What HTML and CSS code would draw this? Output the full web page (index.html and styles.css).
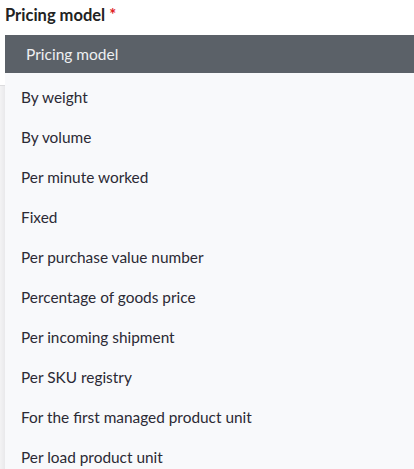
FILE: index.html
```html
<!DOCTYPE html>
<html>
<head>
<meta charset="utf-8">
<link rel="stylesheet" href="styles.css">
</head>
<body>
<div class="field">
  <div class="label">Pricing model <span class="req">*</span></div>
  <div class="select">
    <div class="side"></div>
    <div class="dropdown">
      <div class="head">Pricing model</div>
      <ul class="options">
        <li>By weight</li>
        <li>By volume</li>
        <li>Per minute worked</li>
        <li>Fixed</li>
        <li>Per purchase value number</li>
        <li>Percentage of goods price</li>
        <li>Per incoming shipment</li>
        <li>Per SKU registry</li>
        <li>For the first managed product unit</li>
        <li>Per load product unit</li>
      </ul>
    </div>
  </div>
</div>
</body>
</html>
```
FILE: styles.css
```css
html, body {
  margin: 0;
  padding: 0;
  background: #ffffff;
  font-family: Lato, "Noto Sans", sans-serif;
  color: #2b2a35;
  overflow: hidden;
}
.field {
  width: 414px;
  height: 469px;
}
.label {
  font-weight: 700;
  font-size: 16.5px;
  line-height: 20px;
  padding: 5px 0 0 5px;
  height: 30px;
  box-sizing: border-box;
  color: #222;
}
.req {
  color: #e0201e;
}
.select {
  display: flex;
  margin-top: 5px;
}
.side {
  width: 5px;
  flex: none;
  margin-top: 50px;
  border-top: 1px solid #dcdcde;
  background: linear-gradient(to right, #f3f3f4, #e9e9eb);
  height: 400px;
}
.dropdown {
  flex: 1;
  background: #f8f9fb;
}
.head {
  background: #5b6168;
  color: #eef0f2;
  height: 38px;
  line-height: 38px;
  padding-left: 21px;
  font-size: 15.5px;
}
.options {
  list-style: none;
  margin: 0;
  padding: 4px 0 0 0;
}
.options li {
  height: 40px;
  line-height: 40px;
  padding-left: 16px;
  font-size: 15.4px;
}
```
